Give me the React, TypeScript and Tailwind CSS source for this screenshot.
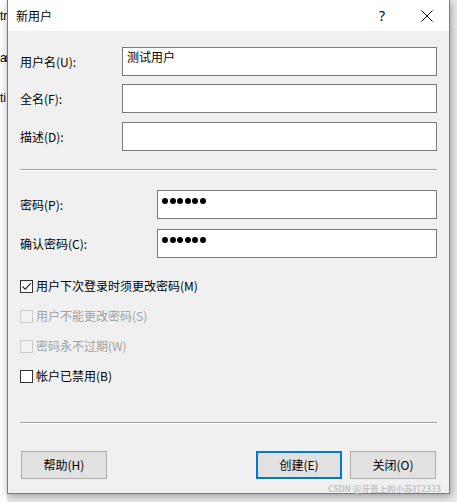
import React from 'react';

const font = "font-['Noto_Sans_CJK_SC','Noto_Sans',sans-serif]";

const TextBox: React.FC<{ value?: string; dots?: number }> = ({ value, dots }) => (
    <div className="flex-1 h-[29px] bg-white border border-[#7a7a7a] pl-[4px] pt-[1px] text-[12px] leading-[15px] text-black">
        {value}
        {dots ? (
            <div className="flex gap-[1.5px] pt-[6px]">
                {Array.from({ length: dots }).map((_, i) => (
                    <span key={i} className="w-[6px] h-[6px] rounded-full bg-black" />
                ))}
            </div>
        ) : null}
    </div>
);

const Check: React.FC<{ label: string; checked?: boolean; disabled?: boolean }> = ({ label, checked, disabled }) => (
    <div className="h-[30px] flex items-center">
        <div
            className={
                disabled
                    ? 'w-[13px] h-[13px] border border-[#cccccc] bg-[#f2f2f2]'
                    : 'w-[13px] h-[13px] border border-[#333333] bg-white flex items-center justify-center'
            }
        >
            {checked && (
                <svg width="11" height="11" viewBox="0 0 11 11">
                    <path d="M1.5 5.5 L4.2 8.2 L9.8 2.2" fill="none" stroke="#222" strokeWidth="1.1" />
                </svg>
            )}
        </div>
        <span className={`ml-[3px] text-[12px] leading-[16px] ${disabled ? 'text-[#a0a0a0]' : 'text-black'}`}>{label}</span>
    </div>
);

const Button: React.FC<{ label: string; focused?: boolean }> = ({ label, focused }) => (
    <div
        className={
            focused
                ? 'w-[86px] h-[28px] border-2 border-[#0078d7] bg-[#e1e1e1] flex items-center justify-center text-[12px] text-black'
                : 'w-[86px] h-[28px] border border-[#adadad] bg-[#e1e1e1] flex items-center justify-center text-[12px] text-black'
        }
    >
        {label}
    </div>
);

const Separator = () => (
    <div className="flex flex-col">
        <div className="h-px bg-[#a0a0a0]" />
        <div className="h-px bg-white" />
    </div>
);

export default function App() {
    return (
        <div className={`w-[457px] h-[502px] bg-[#e9e9e9] flex overflow-hidden relative ${font}`}>
            {/* window behind, mostly hidden */}
            <div className="w-[7px] bg-white overflow-hidden flex flex-col text-[12px] leading-[14px] text-black font-['Liberation_Sans',sans-serif] whitespace-nowrap">
                <div className="mt-[9px]">tr</div>
                <div className="mt-[28px] tracking-[-2px]">ac</div>
                <div className="mt-[26px]">ti</div>
            </div>

            {/* dialog */}
            <div className="w-[443px] h-[494px] border-x border-b border-[#7a7a7a] flex flex-col shadow-[1px_2px_8px_rgba(0,0,0,0.35)] z-10">
                <div className="h-[31px] bg-white flex items-center pl-[8px] pr-[16px]">
                    <span className="text-[12px] leading-[16px] text-black">新用户</span>
                    <span className="ml-auto text-[14px] leading-[16px] text-black font-['Noto_Sans',sans-serif]">?</span>
                    <svg className="ml-[36px]" width="12" height="12" viewBox="0 0 12 12">
                        <path d="M0.5 0.5 L11.5 11.5 M11.5 0.5 L0.5 11.5" stroke="#111" strokeWidth="1" />
                    </svg>
                </div>

                <div className="flex-1 bg-[#f0f0f0] px-[12px] pt-[16px] flex flex-col">
                    <div className="flex items-center">
                        <span className="w-[102px] text-[12px] text-black">用户名(U):</span>
                        <TextBox value="测试用户" />
                    </div>
                    <div className="flex items-center mt-[8px]">
                        <span className="w-[102px] text-[12px] text-black">全名(F):</span>
                        <TextBox />
                    </div>
                    <div className="flex items-center mt-[9px]">
                        <span className="w-[102px] text-[12px] text-black">描述(D):</span>
                        <TextBox />
                    </div>

                    <div className="mt-[18px]">
                        <Separator />
                    </div>

                    <div className="flex items-center mt-[19px]">
                        <span className="w-[137px] text-[12px] text-black">密码(P):</span>
                        <TextBox dots={6} />
                    </div>
                    <div className="flex items-center mt-[10px]">
                        <span className="w-[137px] text-[12px] text-black">确认密码(C):</span>
                        <TextBox dots={6} />
                    </div>

                    <div className="mt-[13px] flex flex-col">
                        <Check label="用户下次登录时须更改密码(M)" checked />
                        <Check label="用户不能更改密码(S)" disabled />
                        <Check label="密码永不过期(W)" disabled />
                        <Check label="帐户已禁用(B)" />
                    </div>

                    <div className="mt-[31px]">
                        <Separator />
                    </div>

                    <div className="mt-[27px] flex px-[1px]">
                        <Button label="帮助(H)" />
                        <div className="ml-auto flex gap-[8px]">
                            <Button label="创建(E)" focused />
                            <Button label="关闭(O)" />
                        </div>
                    </div>
                </div>
            </div>

            <span className="absolute right-[16px] top-[482px] z-20 text-[8.5px] leading-[12px] font-bold text-[#c4c4c4]">
                CSDN @牙膏上的小苏打2333
            </span>
        </div>
    );
}
